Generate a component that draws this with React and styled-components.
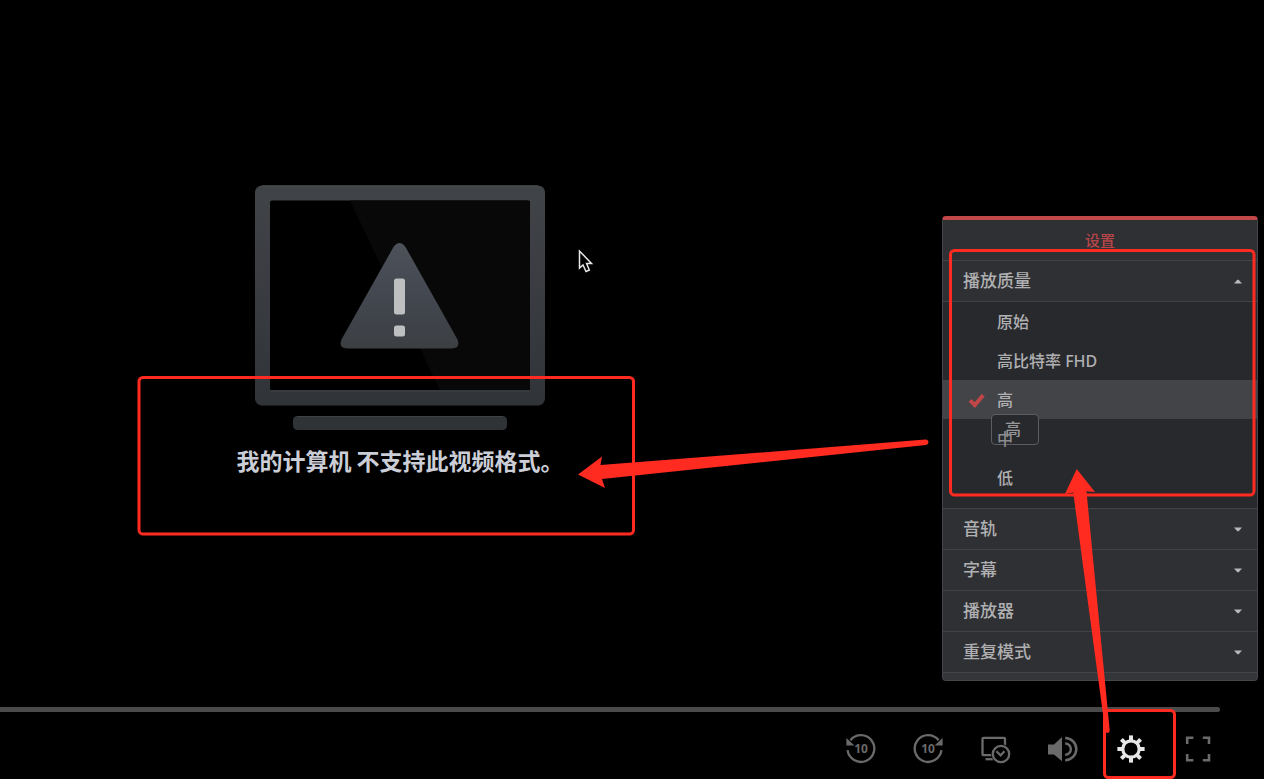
import React, { useState } from "react";
import styled, { createGlobalStyle } from "styled-components";

const GlobalStyle = createGlobalStyle`
  *, *::before, *::after { box-sizing: border-box; }
  body {
    margin: 0;
    background: #000;
    color: #b0b0b2;
    font-family: "Noto Sans", "Noto Sans CJK SC", sans-serif;
    font-weight: 500;
  }
  button, input { font: inherit; color: inherit; }
`;

const Player = styled.div`
  position: relative;
  display: flex;
  flex-direction: column;
  min-height: 100vh;
  overflow: hidden;
`;

const Stage = styled.main`
  flex: 1;
  display: grid;
  grid-template-columns: minmax(0, 1fr) 464px;
  padding: 0 6px 26px 0;
`;

const ErrorNotice = styled.section`
  display: flex;
  flex-direction: column;
  align-items: center;
  padding: 185px 0 0 6px;
`;

const ErrorText = styled.p`
  margin: 12px 0 0;
  color: #cbced6;
  font-family: "Noto Sans CJK SC", sans-serif;
  font-size: 23px;
  font-weight: 700;
  line-height: 34px;
  white-space: nowrap;
`;

const Panel = styled.aside`
  justify-self: end;
  align-self: end;
  width: 316px;
  border: 1px solid #45464a;
  border-top: 4px solid #c24848;
  border-radius: 4px;
  background: #2f3034;
`;

const PanelTitle = styled.h2`
  margin: 0;
  color: #b84548;
  font-size: 15px;
  font-weight: 500;
  line-height: 40px;
  text-align: center;
`;

const GroupButton = styled.button`
  display: flex;
  align-items: center;
  justify-content: space-between;
  width: 100%;
  height: 41px;
  padding: 0 15px 0 20px;
  border: 0;
  border-top: 1px solid #424347;
  background: none;
  font-size: 17px;
  line-height: 24px;
  text-align: left;
`;

const Options = styled.div`
  padding-bottom: 11px;
  border-top: 1px solid #424347;
  background: #28292d;
`;

const Option = styled.label`
  position: relative;
  display: flex;
  align-items: center;
  height: 39px;
  padding-left: 24px;
  background: ${(p) => (p.$selected ? "#434447" : "transparent")};
  font-size: 16px;
  line-height: 24px;
`;

const Radio = styled.input`
  position: absolute;
  opacity: 0;
  width: 1px;
  height: 1px;
  margin: 0;
`;

const CheckSlot = styled.span`
  display: flex;
  width: 30px;
`;

const OptionText = styled.span`
  position: relative;
  z-index: ${(p) => (p.$over ? 2 : "auto")};
  color: ${(p) => (p.$over ? "#8c8c8e" : "inherit")};
`;

const Tooltip = styled.span`
  position: absolute;
  z-index: 1;
  top: 34px;
  left: 48px;
  width: 48px;
  height: 31px;
  padding-right: 4px;
  border: 1px solid #5c5d60;
  border-radius: 4px;
  background: #28292d;
  color: #98989a;
  font-size: 16px;
  line-height: 29px;
  text-align: center;
`;

const PanelFooter = styled.div`
  height: 8px;
  border-top: 1px solid #424347;
  border-radius: 0 0 3px 3px;
  background: #35363a;
`;

const SeekBar = styled.input`
  appearance: none;
  display: block;
  width: calc(100% - 44px);
  height: 5px;
  margin: 0;
  border-radius: 0 3px 3px 0;
  background: #4b4b4b;

  &::-webkit-slider-thumb {
    appearance: none;
    width: 0;
    height: 0;
  }
`;

const Controls = styled.nav`
  align-self: flex-end;
  display: grid;
  grid-template-columns: repeat(6, 1fr);
  width: 405px;
  margin-right: 32px;
  padding: 21px 0 14px;
`;

const ControlButton = styled.button`
  display: flex;
  justify-content: center;
  padding: 0;
  border: 0;
  background: none;
  color: ${(p) => (p.$active ? "#e6e6e6" : "#6a6a6a")};
`;

const Annotations = styled.svg`
  position: absolute;
  top: 0;
  left: 0;
  z-index: 5;
  pointer-events: none;
`;

const Icon = ({ children }) => (
  <svg width="32" height="32" viewBox="0 0 32 32" fill="none" aria-hidden="true">
    {children}
  </svg>
);

const SeekArc = () => (
  <g>
    <path d="M2.6 17.2A13.4 13.4 0 1 0 5.4 7.2" stroke="currentColor" strokeWidth="2.3" />
    <path d="M1.4 5V12.4H9.4Z" fill="currentColor" />
  </g>
);

const SeekLabel = () => (
  <text x="16" y="20" fill="currentColor" fontSize="12" fontWeight="700" textAnchor="middle">
    10
  </text>
);

const BackIcon = () => (
  <Icon>
    <SeekArc />
    <SeekLabel />
  </Icon>
);

const ForwardIcon = () => (
  <Icon>
    <g transform="translate(32 0) scale(-1 1)">
      <SeekArc />
    </g>
    <SeekLabel />
  </Icon>
);

const ScreenClockIcon = () => (
  <Icon>
    <rect x="2.5" y="4.8" width="22.5" height="17.4" rx="1" stroke="currentColor" strokeWidth="2.3" />
    <path d="M5.5 26.2H13" stroke="currentColor" strokeWidth="2.3" />
    <circle cx="21" cy="21" r="10" fill="#000" />
    <circle cx="21" cy="21" r="8.2" stroke="currentColor" strokeWidth="2.3" />
    <path d="M16.4 18.2L20.6 22.4L24.4 18.2" stroke="currentColor" strokeWidth="2.3" />
  </Icon>
);

const VolumeIcon = () => (
  <Icon>
    <path d="M1 11.4H7L15 4V28.2L7 21.6H1Z" fill="currentColor" />
    <path d="M18.2 10.4A5.7 5.7 0 0 1 18.2 21.8" stroke="currentColor" strokeWidth="2.5" />
    <path d="M18.2 5A11.1 11.1 0 0 1 18.2 27.2" stroke="currentColor" strokeWidth="2.5" />
  </Icon>
);

const GearIcon = () => (
  <Icon>
    <circle cx="16" cy="16" r="8.2" stroke="currentColor" strokeWidth="3.2" />
    {[0, 45, 90, 135, 180, 225, 270, 315].map((a) => (
      <rect key={a} x="14" y="2.4" width="4" height="5" fill="currentColor" transform={`rotate(${a} 16 16)`} />
    ))}
  </Icon>
);

const FullscreenIcon = () => (
  <Icon>
    <path
      d="M5.2 11V4.8H11.4M20.8 4.8H27V11M27 21V27.2H20.8M11.4 27.2H5.2V21"
      stroke="currentColor"
      strokeWidth="2.6"
    />
  </Icon>
);

const Caret = ({ up }) => (
  <svg width="8" height="5" viewBox="0 0 8 5" aria-hidden="true">
    <path d={up ? "M0 4.4H8L4.6 0.8H3.4Z" : "M0 0.6H8L4.6 4.2H3.4Z"} fill="#b9b9bb" />
  </svg>
);

const CheckMark = () => (
  <svg width="18" height="16" viewBox="0 0 18 16" fill="none" aria-hidden="true">
    <path d="M3 8.4L7.8 13L16.2 3.2" stroke="#c04648" strokeWidth="4" />
  </svg>
);

const MonitorArt = () => (
  <svg width="290" height="246" viewBox="0 0 290 246" aria-hidden="true">
    <defs>
      <linearGradient id="frame" x1="0" y1="0" x2="0" y2="1">
        <stop offset="0" stopColor="#414447" />
        <stop offset="0.4" stopColor="#3b3d43" />
        <stop offset="1" stopColor="#303438" />
      </linearGradient>
      <linearGradient id="warn" x1="0" y1="0" x2="0" y2="1">
        <stop offset="0" stopColor="#4d525a" />
        <stop offset="0.6" stopColor="#41454d" />
        <stop offset="1" stopColor="#3c3f42" />
      </linearGradient>
    </defs>
    <rect width="290" height="220" y="0.5" rx="7" fill="url(#frame)" />
    <path d="M7 1H283" stroke="#505254" />
    <rect x="15" y="15.5" width="260" height="190" rx="2" fill="#000" />
    <path d="M95 15.5H273Q275 15.5 275 17.5V203.5Q275 205.5 273 205.5H185Z" fill="#080808" />
    <path d="M16 205.8H274" stroke="#47494c" />
    <path
      d="M138.5 62Q144.5 54 150.5 62L202.5 154.5Q205.5 163.5 197 163.5H92Q83.5 163.5 86.5 154.5Z"
      fill="url(#warn)"
    />
    <rect x="139" y="93.5" width="11" height="36" rx="2.5" fill="#bebfc1" />
    <rect x="139" y="140.5" width="11" height="11" rx="2.5" fill="#bebfc1" />
    <rect x="38" y="231" width="214" height="14" rx="4.5" fill="#303336" />
    <path d="M42 231.5H248" stroke="#3f4144" />
  </svg>
);

const QUALITIES = ["原始", "高比特率 FHD", "高", "中", "低"];
const GROUPS = ["音轨", "字幕", "播放器", "重复模式"];
const CONTROLS = [
  ["后退 10 秒", BackIcon],
  ["前进 10 秒", ForwardIcon],
  ["稍后观看", ScreenClockIcon],
  ["音量", VolumeIcon],
  ["设置", GearIcon],
  ["全屏", FullscreenIcon],
];

export default function App() {
  const [quality, setQuality] = useState("高");

  return (
    <Player>
      <GlobalStyle />
      <Stage>
        <ErrorNotice>
          <MonitorArt />
          <ErrorText>我的计算机 不支持此视频格式。</ErrorText>
        </ErrorNotice>
        <Panel>
          <PanelTitle>设置</PanelTitle>
          <GroupButton type="button" aria-expanded="true">
            播放质量
            <Caret up />
          </GroupButton>
          <Options role="radiogroup" aria-label="播放质量">
            {QUALITIES.map((name) => (
              <Option key={name} $selected={name === quality}>
                <Radio
                  type="radio"
                  name="quality"
                  checked={name === quality}
                  onChange={() => setQuality(name)}
                />
                <CheckSlot>{name === quality && <CheckMark />}</CheckSlot>
                <OptionText $over={name === "中"}>{name}</OptionText>
                {name === "高" && <Tooltip role="tooltip">高</Tooltip>}
              </Option>
            ))}
          </Options>
          {GROUPS.map((name) => (
            <GroupButton key={name} type="button" aria-expanded="false">
              {name}
              <Caret />
            </GroupButton>
          ))}
          <PanelFooter />
        </Panel>
      </Stage>
      <SeekBar type="range" min="0" max="100" defaultValue="0" aria-label="播放进度" />
      <Controls>
        {CONTROLS.map(([label, Glyph]) => (
          <ControlButton key={label} type="button" aria-label={label} $active={label === "设置"}>
            <Glyph />
          </ControlButton>
        ))}
      </Controls>
      <Annotations width="1264" height="779" viewBox="0 0 1264 779" aria-hidden="true">
        <path
          d="M579.5 251V268L583 265L586 271.5L589.3 270L586.6 263.5H591.5Z"
          fill="#000"
          stroke="#e8e8e8"
          strokeWidth="1.5"
        />
        <g fill="none" stroke="#ff2a20" strokeWidth="3">
          <rect x="139" y="377.5" width="494.5" height="156.5" rx="4" />
          <rect x="950.5" y="250.5" width="303.5" height="244.5" rx="4" />
          <rect x="1104.5" y="710.5" width="70" height="67" rx="4" />
        </g>
        <g fill="#ff2a20">
          <path d="M578 474.5L602 456.5L600.5 465L925.5 439.6Q928.5 440 928.5 442.3Q928.5 444.5 926 445L602 479L605 488Z" />
          <path d="M1076.7 469L1095 492L1086.5 491.3L1109.7 730Q1109.5 733 1107.5 733Q1105.8 733 1105.2 731L1073.2 492.5L1065 494Z" />
        </g>
      </Annotations>
    </Player>
  );
}
